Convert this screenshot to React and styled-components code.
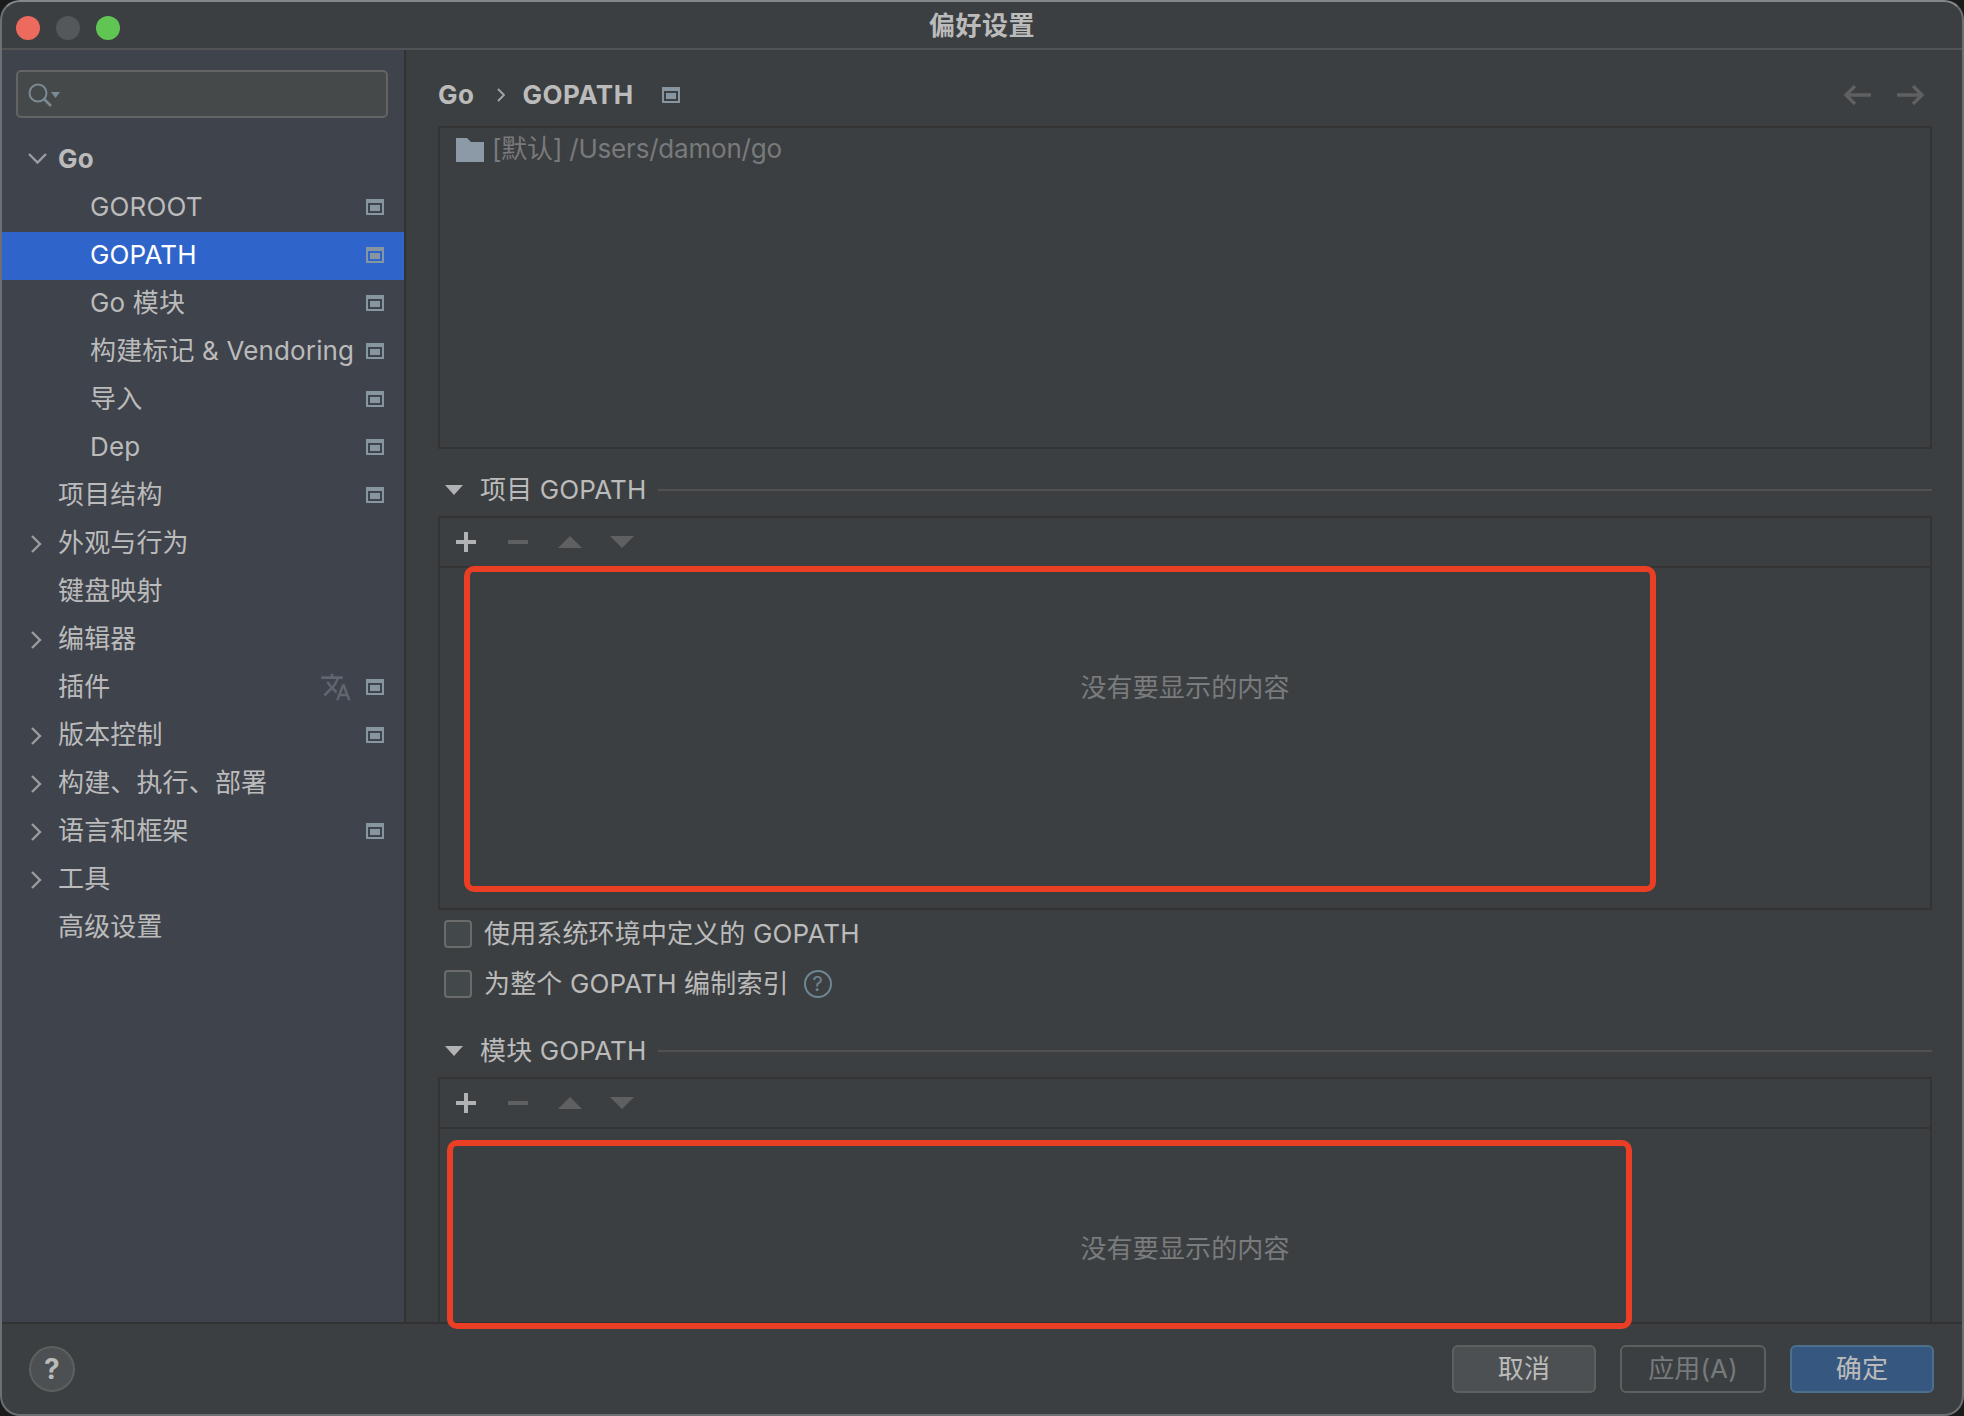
import React from "react";
import styled, { createGlobalStyle } from "styled-components";
import { MdTranslate } from "react-icons/md";

const Global = createGlobalStyle`
  html, body { margin: 0; padding: 0; background: #1b1b1b; }
  * { box-sizing: border-box; }
  body { font-family: Inter, "Noto Sans CJK SC", sans-serif; }
`;

const Window = styled.div`
  position: relative;
  width: 1964px;
  height: 1416px;
  display: flex;
  flex-direction: column;
  background: #3c3f41;
  border: 2px solid #6d7072;
  border-top-color: #85888a;
  border-radius: 20px;
  overflow: hidden;
  color: #bbbbbb;
  font-size: 26px;
  line-height: 36px;
  letter-spacing: 0.15px;
`;

const TitleBar = styled.div`
  position: relative;
  flex: 0 0 48px;
  display: flex;
  align-items: center;
  justify-content: center;
  padding-top: 1px;
  border-bottom: 2px solid #515355;
  font-weight: 700;
  letter-spacing: 0.5px;
`;

const Lights = styled.div`
  position: absolute;
  left: 14px;
  top: 14px;
  display: flex;
  gap: 16px;
`;

const Light = styled.span`
  width: 24px;
  height: 24px;
  border-radius: 50%;
  background: ${(p) => p.$color};
`;

const Main = styled.div`
  flex: 1;
  min-height: 0;
  display: flex;
`;

const Sidebar = styled.nav`
  flex: 0 0 404px;
  background: #3f434c;
  border-right: 2px solid #323232;
  padding-top: 20px;
`;

const Search = styled.div`
  height: 48px;
  margin: 0 16px 18px 14px;
  display: flex;
  align-items: center;
  padding-left: 10px;
  background: #45494a;
  border: 2px solid #646464;
  border-radius: 5px;
`;

const Row = styled.div`
  height: 48px;
  display: flex;
  align-items: center;
  padding-right: 20px;
  padding-bottom: 3px;
  padding-left: ${(p) => (p.$child ? 88 : 56)}px;
  position: relative;
  background: ${(p) => (p.$selected ? "#2f65ca" : "transparent")};
  color: ${(p) => (p.$selected ? "#ffffff" : "#bbbbbb")};
  font-weight: ${(p) => (p.$bold ? 700 : 400)};
`;

const RowLabel = styled.span`
  flex: 1;
  white-space: nowrap;
`;

const Chevron = styled.svg`
  position: absolute;
  left: 26px;
  top: 14px;
  width: 20px;
  height: 20px;
  fill: none;
  stroke: #9a9c9e;
  stroke-width: 2.4;
`;

const Translate = styled(MdTranslate)`
  width: 32px;
  height: 32px;
  margin-right: 14px;
  color: #5e666e;
`;

const Content = styled.div`
  flex: 1;
  min-width: 0;
  overflow: hidden;
  padding: 0 30px 0 32px;
`;

const Crumbs = styled.div`
  height: 76px;
  padding-top: 14px;
  display: flex;
  align-items: center;
  font-weight: 700;
  letter-spacing: 0.5px;
`;

const CrumbSep = styled.svg`
  width: 8px;
  height: 14px;
  margin: 0 17px 0 23px;
  fill: none;
  stroke: #a5a7a9;
  stroke-width: 1.8;
`;

const CrumbIcon = styled.span`
  display: flex;
  margin-left: 28px;
  flex: 1;
`;

const NavArrow = styled.svg`
  width: 28px;
  height: 22px;
  margin-left: ${(p) => (p.$gap ? 26 : 0)}px;
  margin-right: ${(p) => (p.$gap ? 7 : 0)}px;
  fill: none;
  stroke: #5e6062;
  stroke-width: 3.4;
`;

const ListBox = styled.div`
  height: 323px;
  border: 2px solid #343434;
  padding: 3px 16px;
  display: flex;
  align-items: flex-start;
  gap: 8px;
  color: #787a7c;
  letter-spacing: -0.2px;
`;

const Folder = styled.svg`
  width: 28px;
  height: 24px;
  margin-top: 7px;
  fill: #8b9aa6;
`;

const Section = styled.div`
  height: 67px;
  padding: 15px 0 0 7px;
  display: flex;
  align-items: center;
`;

const SectionArrow = styled.span`
  width: 0;
  height: 0;
  border-left: 9px solid transparent;
  border-right: 9px solid transparent;
  border-top: 10px solid #b0b2b4;
  margin-right: 17px;
`;

const SectionTitle = styled.span`
  padding-bottom: 1px;
`;

const SectionLine = styled.span`
  flex: 1;
  height: 2px;
  margin-left: 12px;
  background: #515151;
`;

const Table = styled.div`
  height: ${(p) => p.$height}px;
  flex-shrink: 0;
  border: 2px solid #343434;
`;

const Toolbar = styled.div`
  height: 50px;
  display: flex;
  align-items: center;
  padding-left: 16px;
  gap: 32px;
  border-bottom: 2px solid #343434;
`;

const ToolIcon = styled.svg`
  width: 20px;
  height: 20px;
  fill: ${(p) => (p.$active ? "#b0b2b4" : "#5e6062")};
`;

const TriIcon = styled(ToolIcon)`
  width: 24px;
  height: 12px;
  margin-left: ${(p) => (p.$first ? -2 : -4)}px;
`;

const Empty = styled.div`
  padding-top: 102px;
  text-align: center;
  color: #797b7d;
`;

const CheckRow = styled.label`
  height: 50px;
  display: flex;
  align-items: center;
  padding-left: 6px;
  padding-bottom: 2px;
  gap: 12px;
`;

const Box = styled.span`
  width: 28px;
  height: 28px;
  background: #43484a;
  border: 2px solid #6b6b6b;
  border-radius: 4px;
`;

const CheckText = styled.span`
  padding-bottom: 1px;
`;

const HelpSmall = styled.span`
  width: 28px;
  height: 28px;
  margin-left: 3px;
  display: flex;
  align-items: center;
  justify-content: center;
  border: 2px solid #6f8592;
  border-radius: 50%;
  color: #6f8592;
  font-size: 20px;
`;

const Footer = styled.div`
  flex: 0 0 92px;
  display: flex;
  align-items: center;
  padding: 0 28px 0 27px;
  gap: 24px;
  border-top: 2px solid #323232;
`;

const HelpButton = styled.div`
  width: 46px;
  height: 46px;
  margin-right: auto;
  display: flex;
  align-items: center;
  justify-content: center;
  background: #4c5052;
  border: 2px solid #5e6060;
  border-radius: 50%;
  font-weight: 700;
  font-size: 28px;
`;

const colors = {
  normal: ["#4c5052", "#5e6060", "#bbbbbb"],
  ghost: ["transparent", "#5e6060", "#777a7c"],
  primary: ["#365880", "#4c708c", "#bbbbbb"],
};

const Button = styled.div`
  width: ${(p) => (p.$kind === "ghost" ? 146 : 144)}px;
  height: 48px;
  display: flex;
  align-items: center;
  justify-content: center;
  background: ${(p) => colors[p.$kind][0]};
  border: 2px solid ${(p) => colors[p.$kind][1]};
  color: ${(p) => colors[p.$kind][2]};
  border-radius: 6px;
`;

const Highlight = styled.div`
  position: absolute;
  left: ${(p) => p.$x}px;
  top: ${(p) => p.$y}px;
  width: ${(p) => p.$w}px;
  height: ${(p) => p.$h}px;
  border: 6px solid #ea3f24;
  border-radius: 10px;
`;

const ConfigIcon = () => (
  <svg width="18" height="16" viewBox="0 0 18 16">
    <path fill="#8795a1" d="M0 0h18v16H0zM2 4v10h14V4z" fillRule="evenodd" />
    <rect x="4" y="6" width="10" height="6" fill="#8795a1" />
  </svg>
);

const rows = [
  { label: "Go", open: true, bold: true },
  { label: "GOROOT", child: true, config: true },
  { label: "GOPATH", child: true, config: true, selected: true },
  { label: "Go 模块", child: true, config: true },
  { label: "构建标记 & Vendoring", child: true, config: true },
  { label: "导入", child: true, config: true },
  { label: "Dep", child: true, config: true },
  { label: "项目结构", config: true },
  { label: "外观与行为", closed: true },
  { label: "键盘映射" },
  { label: "编辑器", closed: true },
  { label: "插件", config: true, translate: true },
  { label: "版本控制", closed: true, config: true },
  { label: "构建、执行、部署", closed: true },
  { label: "语言和框架", closed: true, config: true },
  { label: "工具", closed: true },
  { label: "高级设置" },
];

const TableTools = () => (
  <Toolbar>
    <ToolIcon $active viewBox="0 0 20 20"><path d="M8 0h4v8h8v4h-8v8H8v-8H0V8h8z" /></ToolIcon>
    <ToolIcon viewBox="0 0 20 20"><rect y="8" width="20" height="4" /></ToolIcon>
    <TriIcon $first viewBox="0 0 24 12"><path d="M12 0l12 12H0z" /></TriIcon>
    <TriIcon viewBox="0 0 24 12"><path d="M0 0h24L12 12z" /></TriIcon>
  </Toolbar>
);

export default function App() {
  return (
    <>
      <Global />
      <Window>
        <TitleBar>
          <Lights>
            <Light $color="#ed6a5e" />
            <Light $color="#54585a" />
            <Light $color="#61c554" />
          </Lights>
          偏好设置
        </TitleBar>
        <Main>
          <Sidebar>
            <Search>
              <svg width="32" height="28" viewBox="0 0 32 28" fill="none">
                <circle cx="10" cy="13" r="8.5" stroke="#7b8a94" strokeWidth="2" />
                <path d="M16 19l7 7" stroke="#7b8a94" strokeWidth="2.5" />
                <path d="M23 12h9l-4.5 6z" fill="#7b8a94" />
              </svg>
            </Search>
            {rows.map((r) => (
              <Row key={r.label} $child={r.child} $bold={r.bold} $selected={r.selected}>
                {r.open && (
                  <Chevron viewBox="0 0 20 20"><path d="M1 4l8.5 8.5L18 4" /></Chevron>
                )}
                {r.closed && (
                  <Chevron viewBox="0 0 20 20"><path d="M4 2l8 8-8 8" /></Chevron>
                )}
                <RowLabel>{r.label}</RowLabel>
                {r.translate && <Translate />}
                {r.config && <ConfigIcon />}
              </Row>
            ))}
          </Sidebar>
          <Content>
            <Crumbs>
              Go
              <CrumbSep viewBox="0 0 8 14"><path d="M1 1l6 6-6 6" /></CrumbSep>
              GOPATH
              <CrumbIcon><ConfigIcon /></CrumbIcon>
              <NavArrow viewBox="0 0 28 22"><path d="M28 11H3M12 2l-9 9 9 9" /></NavArrow>
              <NavArrow $gap viewBox="0 0 28 22"><path d="M0 11h25M16 2l9 9-9 9" /></NavArrow>
            </Crumbs>
            <ListBox>
              <Folder viewBox="0 0 28 24"><path d="M0 0h11l4 4h13v20H0z" /></Folder>
              [默认] /Users/damon/go
            </ListBox>
            <Section>
              <SectionArrow />
              <SectionTitle>项目 GOPATH</SectionTitle>
              <SectionLine />
            </Section>
            <Table $height={394}>
              <TableTools />
              <Empty>没有要显示的内容</Empty>
            </Table>
            <CheckRow><Box /><CheckText>使用系统环境中定义的 GOPATH</CheckText></CheckRow>
            <CheckRow>
              <Box /><CheckText>为整个 GOPATH 编制索引</CheckText>
              <HelpSmall>?</HelpSmall>
            </CheckRow>
            <Section>
              <SectionArrow />
              <SectionTitle>模块 GOPATH</SectionTitle>
              <SectionLine />
            </Section>
            <Table $height={400}>
              <TableTools />
              <Empty>没有要显示的内容</Empty>
            </Table>
          </Content>
        </Main>
        <Footer>
          <HelpButton>?</HelpButton>
          <Button $kind="normal">取消</Button>
          <Button $kind="ghost">应用(A)</Button>
          <Button $kind="primary">确定</Button>
        </Footer>
        <Highlight $x={462} $y={564} $w={1192} $h={326} />
        <Highlight $x={445} $y={1138} $w={1185} $h={189} />
      </Window>
    </>
  );
}
